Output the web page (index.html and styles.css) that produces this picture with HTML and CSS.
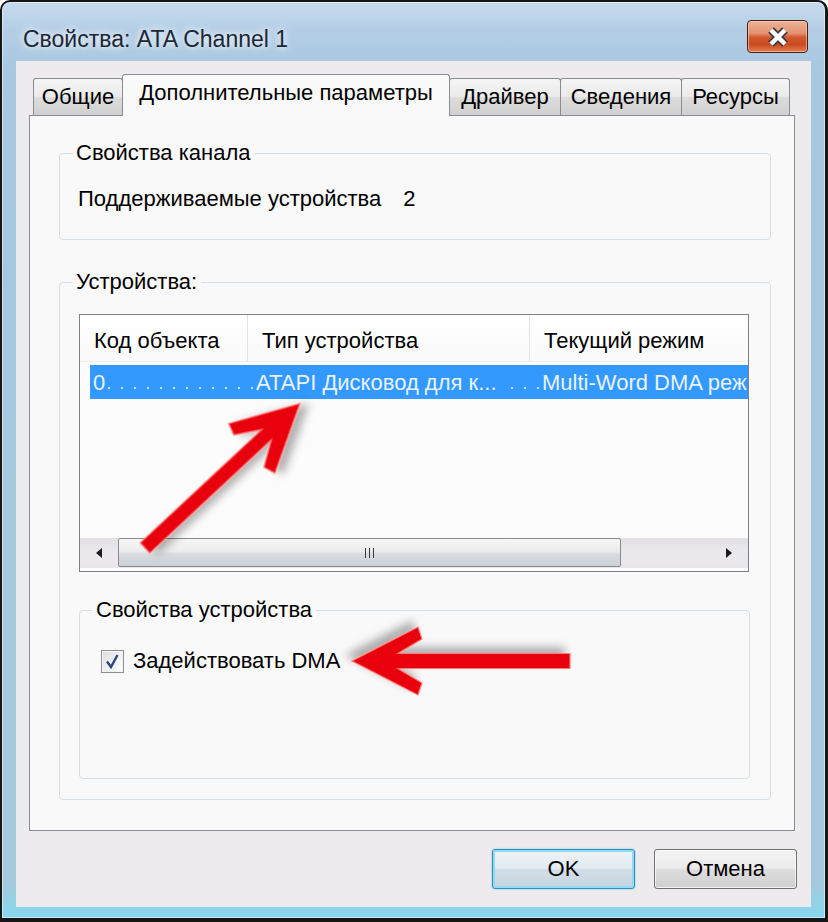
FILE: index.html
```html
<!DOCTYPE html>
<html lang="ru">
<head>
    <meta charset="UTF-8">
    <title>Свойства: ATA Channel 1</title>
    <link rel="stylesheet" href="styles.css">
</head>
<body>
    <div class="window">
        <div class="titlebar">
            <div class="title">Свойства: ATA Channel 1</div>
            <button class="close-btn" aria-label="Закрыть">
                <svg width="28" height="20" viewBox="0 0 28 20">
                    <path d="M7 3 L21 17 M21 3 L7 17" stroke="#3b3b3b" stroke-width="8" fill="none"/>
                    <path d="M7 3 L21 17 M21 3 L7 17" stroke="#ffffff" stroke-width="4.5" fill="none"/>
                </svg>
            </button>
        </div>

        <div class="client">
            <div class="tabs">
                <div class="tab tab-general">Общие</div>
                <div class="tab tab-advanced active">Дополнительные параметры</div>
                <div class="tab tab-driver">Драйвер</div>
                <div class="tab tab-details">Сведения</div>
                <div class="tab tab-resources">Ресурсы</div>
            </div>

            <div class="tab-pane">
                <fieldset class="group group-channel">
                    <legend>Свойства канала</legend>
                    <div class="prop-row">
                        <span>Поддерживаемые устройства</span>
                        <span>2</span>
                    </div>
                </fieldset>

                <fieldset class="group group-devices">
                    <legend>Устройства:</legend>
                    <div class="listview">
                        <div class="lv-header">
                            <div class="lv-col col-id">Код объекта</div>
                            <div class="lv-col col-type">Тип устройства</div>
                            <div class="lv-col col-mode">Текущий режим</div>
                        </div>
                        <div class="lv-body">
                            <div class="lv-row selected">
                                <div class="lv-cell cell-id"><span class="cell-text">0</span></div>
                                <div class="lv-cell cell-type"><span class="cell-text">ATAPI Дисковод для к...</span></div>
                                <div class="lv-cell cell-mode"><span class="cell-text">Multi-Word DMA реж</span></div>
                            </div>
                        </div>
                        <div class="hscroll">
                            <div class="scroll-btn">
                                <svg width="8" height="10" viewBox="0 0 8 10"><polygon points="7,0 1,5 7,10" fill="#1a1a1a"/></svg>
                            </div>
                            <div class="scroll-track">
                                <div class="scroll-thumb"><span class="grip"></span></div>
                            </div>
                            <div class="scroll-btn">
                                <svg width="8" height="10" viewBox="0 0 8 10"><polygon points="1,0 7,5 1,10" fill="#1a1a1a"/></svg>
                            </div>
                        </div>
                    </div>

                    <fieldset class="group group-device">
                        <legend>Свойства устройства</legend>
                        <label class="check-row">
                            <span class="check-box">
                                <svg width="21" height="21" viewBox="0 0 21 21">
                                    <path d="M5 10.5 L9 16 L15.5 4" stroke="#2f4684" stroke-width="2.4" fill="none"/>
                                </svg>
                            </span>
                            Задействовать DMA
                        </label>
                    </fieldset>
                </fieldset>
            </div>

            <div class="dialog-buttons">
                <button class="btn btn-default">OK</button>
                <button class="btn">Отмена</button>
            </div>
        </div>
    </div>

    <svg class="annotations" width="828" height="922" viewBox="0 0 828 922">
        <defs>
            <filter id="arrow-shadow" x="-30%" y="-30%" width="170%" height="170%">
                <feDropShadow dx="6" dy="6" stdDeviation="4.5" flood-color="#000000" flood-opacity="0.3"/>
            </filter>
        </defs>
        <polygon class="arrow" transform="translate(145 548) rotate(-43)"
                 points="0,-7 166,-7 142,-22 146,-34 212,0 146,34 142,22 166,7 0,7"/>
        <polygon class="arrow" transform="translate(570 661) rotate(180)"
                 points="0,-7.5 172,-7.5 148,-22 152,-34 218,0 152,34 148,22 172,7.5 0,7.5"/>
    </svg>
</body>
</html>
```

FILE: styles.css
```css
* {
    box-sizing: border-box;
    margin: 0;
    padding: 0;
}
body {
    position: relative;
    width: 828px;
    height: 922px;
    overflow: hidden;
    background: #ffffff;
    font-family: 'Liberation Sans', Arial, sans-serif;
    font-size: 22px;
    color: #000000;
}

/* window frame */
.window {
    display: flex;
    flex-direction: column;
    width: 828px;
    height: 922px;
    padding: 0 14px 11px 14px;
    border: 2px solid #161616;
    border-right-width: 3px;
    border-bottom-width: 4px;
    border-radius: 10px 10px 0 0;
    background: linear-gradient(180deg, #c6dbee 0%, #b3cde5 30px, #a7c8df 70px, #a4c8dc 880px, #92d3e8 902px, #86d7ef 100%);
    box-shadow: inset 0 0 0 1px rgba(255, 255, 255, 0.5);
}
.titlebar {
    display: flex;
    justify-content: space-between;
    align-items: flex-start;
    height: 59px;
}
.title {
    padding: 24px 0 0 7px;
    font-size: 23px;
    line-height: 26px;
    color: #1c2737;
    text-shadow: 0 0 6px rgba(255, 255, 255, 0.9), 0 0 12px rgba(255, 255, 255, 0.7);
}
.close-btn {
    display: flex;
    align-items: center;
    justify-content: center;
    width: 61px;
    height: 33px;
    margin: 18px 3px 0 0;
    border: 1px solid #4a1f12;
    border-radius: 4px;
    background: linear-gradient(180deg, #ecb49a 0%, #e39070 40%, #d25a2e 52%, #c9491f 75%, #e57c4f 100%);
    box-shadow: inset 0 0 0 1px rgba(255, 210, 190, 0.6);
}

/* client area */
.client {
    flex: 1;
    display: flex;
    flex-direction: column;
    padding: 13px 16px 0 13px;
    background: #eeebee;
}
.tabs {
    position: relative;
    z-index: 1;
    display: flex;
    align-items: flex-end;
    height: 41px;
    padding-left: 4px;
}
.tab {
    height: 37px;
    border: 1px solid #898c95;
    border-bottom: none;
    border-radius: 3px 3px 0 0;
    line-height: 35px;
    text-align: center;
    white-space: nowrap;
    background: linear-gradient(180deg, #f4f4f4 0%, #ebebeb 48%, #dcdcdc 52%, #d0d0d0 100%);
}
.tab + .tab {
    margin-left: -1px;
}
.tab.active {
    position: relative;
    z-index: 2;
    height: 42px;
    margin-bottom: -1px;
    background: #f9f9f9;
}
.tab-general { width: 90px; }
.tab-advanced { width: 328px; }
.tab-driver { width: 112px; }
.tab-details { width: 122px; }
.tab-resources { width: 109px; }

.tab-pane {
    position: relative;
    height: 716px;
    padding: 25px 23px 0 29px;
    border: 1px solid #898c95;
    background: #f9f9f9;
}

/* group boxes */
.group {
    min-width: 0;
    padding: 0;
    border: 1px solid #d5dfe5;
    border-radius: 4px;
}
.group legend {
    margin-left: 12px;
    padding: 0 4px;
    line-height: 24px;
}
.prop-row {
    display: flex;
    gap: 22px;
    margin: 21px 0 27px 18px;
    line-height: 26px;
}
.group-devices {
    margin-top: 30px;
}
.group-device {
    margin: 26px 20px 20px 19px;
}
.check-row {
    display: flex;
    align-items: center;
    gap: 9px;
    height: 24px;
    margin: 27px 0 105px 21px;
    line-height: 24px;
}
.check-box {
    display: flex;
    width: 23px;
    height: 23px;
    border: 1px solid #8e8f8f;
    background: linear-gradient(135deg, #d9dde3 0%, #f2f3f5 60%, #ffffff 100%);
    box-shadow: inset 0 0 0 1px #f4f4f4;
}

/* list view */
.listview {
    display: flex;
    flex-direction: column;
    height: 258px;
    margin: 20px 21px 0 19px;
    overflow: hidden;
    border: 1px solid #7d8088;
    background: #fcfcfc;
}
.lv-header {
    display: flex;
    height: 47px;
    border-bottom: 1px solid #ececec;
    background: linear-gradient(180deg, #ffffff 0%, #fafafa 100%);
}
.lv-col {
    padding: 6px 0 0 14px;
    line-height: 40px;
    white-space: nowrap;
    border-right: 1px solid #e2e3e5;
}
.col-id { width: 168px; }
.col-type { width: 282px; }
.col-mode { flex: 1; border-right: none; }

.lv-body {
    flex: 1;
    padding-top: 3px;
    overflow: hidden;
}
.lv-row {
    position: relative;
    display: flex;
    height: 34px;
    margin-left: 10px;
    line-height: 36px;
    white-space: nowrap;
}
.lv-row.selected {
    background: #3399ff;
    color: #e8f3ff;
}
.lv-row.selected::before {
    content: '';
    position: absolute;
    top: 22px;
    left: 18px;
    right: 0;
    height: 2px;
    background: radial-gradient(circle at 1px 1px, rgba(205, 232, 255, 0.9) 1px, transparent 1.6px) 0 0 / 13px 2px repeat-x;
}
.lv-cell {
    position: relative;
    overflow: hidden;
}
.cell-text {
    padding-right: 3px;
    background: #3399ff;
}
.cell-id { width: 158px; padding-left: 3px; }
.cell-type { width: 282px; padding-left: 8px; }
.cell-mode { flex: 1; padding-left: 12px; }

.hscroll {
    display: flex;
    height: 30px;
    margin-bottom: 3px;
    background: linear-gradient(180deg, #e2e0e4 0%, #ebe9ed 50%, #e8e6ea 100%);
}
.scroll-btn {
    display: flex;
    align-items: center;
    justify-content: center;
    width: 38px;
}
.scroll-track {
    flex: 1;
}
.scroll-thumb {
    display: flex;
    align-items: center;
    justify-content: center;
    width: 503px;
    height: 29px;
    border: 1px solid #8a8a8a;
    border-radius: 2px;
    background: linear-gradient(180deg, #f5f5f5 0%, #ececec 45%, #d9dce1 55%, #ccd1d7 100%);
}
.grip {
    width: 9px;
    height: 10px;
    background: repeating-linear-gradient(90deg, #3a3a3a 0, #3a3a3a 1px, transparent 1px, transparent 4px);
}

/* dialog buttons */
.dialog-buttons {
    display: flex;
    justify-content: flex-end;
    gap: 19px;
    margin: 18px -2px 0 0;
}
.btn {
    width: 143px;
    height: 40px;
    border: 1px solid #707070;
    border-radius: 3px;
    font-family: 'Liberation Sans', Arial, sans-serif;
    font-size: 22px;
    color: #000000;
    background: linear-gradient(180deg, #f3f3f3 0%, #ebebeb 48%, #dddddd 52%, #cfcfcf 100%);
    box-shadow: inset 0 0 0 1px rgba(255, 255, 255, 0.7);
}
.btn-default {
    border-color: #3a89b6;
    background: linear-gradient(180deg, #eef4f8 0%, #e2ebf1 48%, #d2dde6 52%, #c8d5df 100%);
    box-shadow: inset 0 0 0 2px #8fdcf5, 0 0 2px #5ec2ea;
}

/* red annotation arrows */
.annotations {
    position: absolute;
    top: 0;
    left: 0;
    pointer-events: none;
}
.arrow {
    fill: #e8050a;
    stroke: #ff7b7b;
    stroke-width: 1.2;
    filter: url(#arrow-shadow);
}
```
